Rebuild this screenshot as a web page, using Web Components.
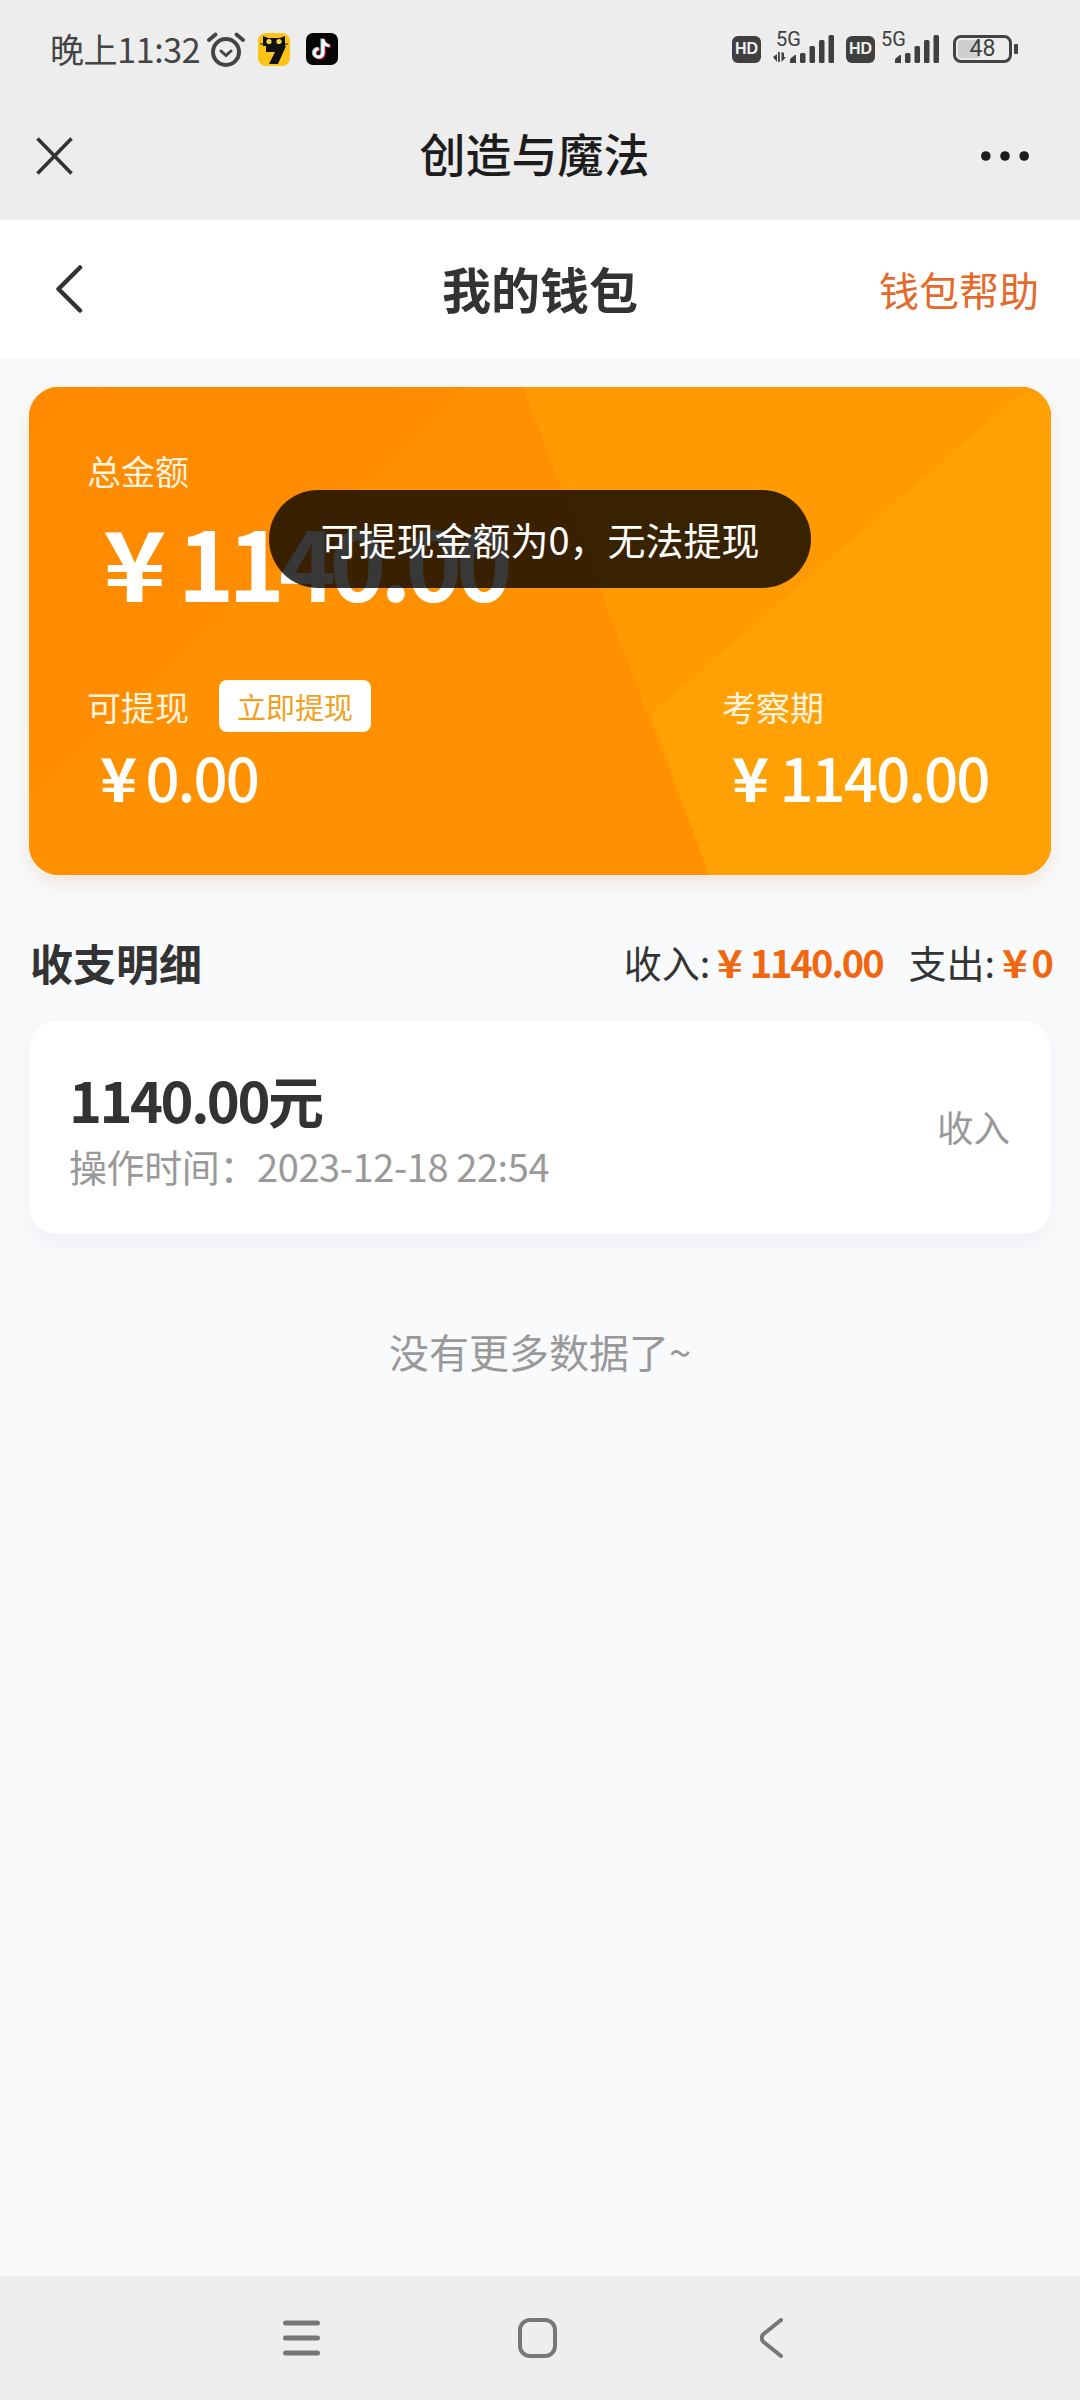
<!doctype html>
<html lang="zh">
<head>
<meta charset="utf-8">
<style>
  html, body { margin: 0; padding: 0; }
  body {
    width: 1080px;
    height: 2400px;
    overflow: hidden;
    background: #f9fafc;
    font-family: "Noto Sans CJK SC", "Noto Sans", sans-serif;
    display: flex;
    flex-direction: column;
  }
  main { flex: 1; position: relative; }
</style>
</head>
<body>
<status-bar></status-bar>
<app-bar>创造与魔法</app-bar>
<wallet-nav></wallet-nav>
<main>
  <balance-card></balance-card>
  <wallet-toast>可提现金额为0，无法提现</wallet-toast>
  <section-head></section-head>
  <record-item amount="1140.00元" time="操作时间：2023-12-18 22:54" kind="收入"></record-item>
  <end-note>没有更多数据了~</end-note>
</main>
<nav-bar></nav-bar>

<script>
function define(name, html) {
  customElements.define(name, class extends HTMLElement {
    constructor() {
      super();
      this.attachShadow({ mode: "open" }).innerHTML = html;
    }
  });
}

// status bar icons
const signal = `<svg width="44" height="28" viewBox="0 0 44 28"><g fill="#3f3f3f">
  <path d="M0 28v-3q0-1 1-2l4-3q1-1 1 1v7z"/><rect x="10" y="18" width="5.500" height="10" rx="1.500"/><rect x="19.500" y="11" width="5.500" height="17" rx="1.500"/><rect x="29" y="5" width="5.500" height="23" rx="1.500"/><rect x="38.500" y="0" width="5.500" height="28" rx="1.500"/></g></svg>`;
const hd = `<span class="hd">HD</span>`;
const tt = "M17 6v14a4.300 4.300 0 1 1-4.300-4.300M17 7c.8 3.400 3 5.400 6.500 5.800";

define("status-bar", `
<style>
  :host { display: flex; align-items: center; height: 98px; padding-left: 50px; background: #ededed; color: #444; }
  .time { font: 400 34px "Noto Sans CJK SC", sans-serif; letter-spacing: -0.4px; width: 157px; white-space: nowrap; margin-top: -2px; }
  .left { display: flex; align-items: center; height: 100%; }
  .left svg { display: block; }
  .right { margin-left: auto; margin-right: 62px; display: flex; align-items: center; }
  .hd { width: 29px; height: 27px; border-radius: 6px; background: #3f3f3f; color: #eee; font: 700 16px "Liberation Sans", sans-serif; display: flex; align-items: center; justify-content: center; }
  .net { position: relative; width: 73px; height: 28px; margin-right: 12px; }
  .net.b { width: 64px; margin-right: 14px; }
  .g { position: absolute; left: 15px; top: -6px; font: 400 20px/20px "Roboto", sans-serif; color: #3f3f3f; }
  .net.b .g { left: 6px; }
  .net svg { position: absolute; right: 0; bottom: 0; }
  .arrows { position: absolute; left: 12px; bottom: 1px; }
  .bat { position: relative; width: 59px; height: 28px; border: 3.500px solid #444; border-radius: 8px; box-sizing: border-box; }
  .bat i { position: absolute; left: 2px; top: 2px; bottom: 2px; width: 22px; background: #cfcfcf; border-radius: 3px 0 0 3px; }
  .bat b { position: absolute; inset: 0; text-align: center; font: 400 23px/21px "Roboto", sans-serif; color: #3f3f3f; }
  .nub { width: 4px; height: 10px; background: #444; margin-left: 2px; border-radius: 1px; }
</style>
<div class="left">
  <span class="time">晚上11:32</span>
  <svg width="38" height="36" viewBox="0 0 38 36"><g fill="none" stroke="#444" stroke-linecap="round"><circle cx="19" cy="21" r="13" stroke-width="4"/><path d="M14 20l5 4.500 5-4.500" stroke-width="3"/><path d="M2 9l6.500-5.500M36 9l-6.500-5.500" stroke-width="3.800"/></g></svg>
  <svg width="32" height="33" viewBox="0 0 32 33" style="margin-left:13px"><rect width="32" height="33" rx="8" fill="#fcc419"/><path d="M5 3l5 2h12l5-2v10H5z" fill="#111"/><path d="M8 13h20L20 31h-9l6-12H8z" fill="#111"/><path d="M2 11h5M25 11h5" stroke="#111" stroke-width="1.200"/><circle cx="11" cy="8.500" r="2.600" fill="#f3d34a"/><circle cx="21" cy="8.500" r="2.600" fill="#f3d34a"/></svg>
  <svg width="32" height="32" viewBox="0 0 32 32" style="margin-left:16px"><rect width="32" height="32" rx="7" fill="#050505"/><path d="${tt}" fill="none" stroke="#ee1d52" stroke-width="3.200" transform="translate(1 .6)"/><path d="${tt}" fill="none" stroke="#69c9d0" stroke-width="3.200" transform="translate(-1 -.4)"/><path d="${tt}" fill="none" stroke="#fff" stroke-width="3"/></svg>
</div>
<div class="right">
  ${hd}
  <div class="net a"><span class="g">5G</span><span class="arrows"><svg width="14" height="10" viewBox="0 0 14 10" style="position:static;display:block"><path d="M0 5l4-3v8zM5 0h1.800v10H5zM8.500 0v10l4.500-5-2 0V1z" fill="#3f3f3f"/></svg></span>${signal}</div>
  ${hd}
  <div class="net b"><span class="g">5G</span>${signal}</div>
  <div class="bat"><i></i><b>48</b></div><div class="nub"></div>
</div>`);

define("app-bar", `
<style>
  :host { display: flex; align-items: center; justify-content: space-between; height: 122px; box-sizing: border-box; padding: 0 51px 6px 36px; background: #ededed; position: relative; }
  .title { position: absolute; left: 0; right: 11px; top: 24px; text-align: center; font: 500 46px/60px "Noto Sans CJK SC", sans-serif; color: #1c1c1c; }
  svg { display: block; }
</style>
<svg width="37" height="38" viewBox="0 0 37 38"><path d="M1.500 1.500l34 35M35.500 1.500l-34 35" stroke="#333" stroke-width="3.600" fill="none"/></svg>
<div class="title"><slot></slot></div>
<svg width="48" height="10" viewBox="0 0 48 10"><g fill="#1c1c1c"><circle cx="4.800" cy="5" r="4.800"/><circle cx="24" cy="5" r="4.800"/><circle cx="43.200" cy="5" r="4.800"/></g></svg>`);

define("wallet-nav", `
<style>
  :host { display: flex; align-items: center; justify-content: space-between; height: 138px; box-sizing: border-box; padding: 0 41px 0 55px; background: #fff; position: relative; }
  svg { display: block; }
  h1 { position: absolute; left: 0; right: 0; top: 33px; margin: 0; text-align: center; font: 700 49px/70px "Noto Sans CJK SC", sans-serif; color: #333; }
  a { font: 400 40px/60px "Noto Sans CJK SC", sans-serif; color: #e5692a; }
</style>
<svg width="28" height="48" viewBox="0 0 28 48"><path d="M25 2.500L3.500 24 25 45.500" fill="none" stroke="#333" stroke-width="4.500" stroke-linecap="round" stroke-linejoin="round"/></svg>
<h1>我的钱包</h1>
<a>钱包帮助</a>`);

define("balance-card", `
<style>
  :host { display: block; position: relative; height: 488px; margin: 29px 29px 0; border-radius: 30px; background: #ff9100; color: #fff; box-shadow: 0 8px 20px rgba(200,140,60,.18); }
  .bg { position: absolute; inset: 0; width: 100%; height: 100%; border-radius: 30px; display: block; }
  .in { position: relative; height: 100%; box-sizing: border-box; padding: 57px 41px 0 58px; display: flex; flex-direction: column; }
  .label { font: 400 34px/54px "Noto Sans CJK SC", sans-serif; color: #fff4e0; }
  .total { font: 700 96px/104px "Noto Sans CJK SC", sans-serif; letter-spacing: -6px; margin: 11px 0 0 16px; white-space: nowrap; }
  .y { display: inline-block; letter-spacing: 0; transform-origin: 0 50%; }
  .total .y { transform: scaleX(1.12); margin-right: 18px; }
  .row { display: flex; justify-content: space-between; margin-top: 67px; }
  .head { display: flex; align-items: center; gap: 30px; height: 54px; }
  .btn { background: #fff; color: #f2a01e; font: 400 29px/52px "Noto Sans CJK SC", sans-serif; width: 152px; height: 52px; text-align: center; border-radius: 8px; margin-top: -2px; }
  .amt { font: 500 60px/72px "Noto Sans CJK SC", sans-serif; letter-spacing: -2px; margin: 6px 0 0 13px; white-space: nowrap; }
  .amt .y { font-weight: 700; transform: scaleX(1.05); margin-right: 10px; }
  .rt { width: 288px; }
  .rt .amt { margin-left: 10px; }
  .rt .amt .y { margin-right: 12px; }
</style>
<svg class="bg" viewBox="0 0 1022 488" preserveAspectRatio="none">
  <defs><linearGradient id="g" x1="0" y1="0" x2="1" y2="1"><stop offset="0" stop-color="#ff8a00"/><stop offset="1" stop-color="#ff8f00"/></linearGradient></defs>
  <rect width="1022" height="488" fill="#ff9100"/>
  <path d="M0 0H437L0 408z" fill="url(#g)"/>
  <path d="M494 0H1022V488H680z" fill="#ff9b00"/>
  <path d="M1022 0L990 8 622 327 680 488H1022z" fill="#ffa005"/>
</svg>
<div class="in">
  <div class="label">总金额</div>
  <div class="total"><span class="y">¥</span>1140.00</div>
  <div class="row">
    <div>
      <div class="head"><span class="label">可提现</span><span class="btn">立即提现</span></div>
      <div class="amt"><span class="y">¥</span>0.00</div>
    </div>
    <div class="rt">
      <div class="head"><span class="label">考察期</span></div>
      <div class="amt"><span class="y">¥</span>1140.00</div>
    </div>
  </div>
</div>`);

define("wallet-toast", `
<style>
  :host { position: absolute; left: 269px; top: 132px; width: 542px; height: 98px; border-radius: 49px; background: rgba(0,0,0,.78); color: #fff; display: flex; align-items: center; justify-content: center; font: 400 38px/1 "Noto Sans CJK SC", sans-serif; white-space: nowrap; }
</style>
<slot></slot>`);

define("section-head", `
<style>
  :host { display: flex; align-items: center; justify-content: space-between; height: 66px; margin: 54px 28px 0 30px; color: #333; }
  h2 { margin: 0; font: 700 43px/66px "Noto Sans CJK SC", sans-serif; }
  .sum { font: 400 38px/66px "Noto Sans CJK SC", sans-serif; white-space: nowrap; display: flex; align-items: baseline; }
  b { color: #f0670f; font-weight: 700; letter-spacing: -2px; margin-left: 7px; }
  .y { display: inline-block; letter-spacing: 0; transform: scaleX(1.15); transform-origin: 0 50%; margin-right: 10px; }
  b:last-child .y { margin-right: 7px; }
  .gap { margin-left: 26px; }
</style>
<h2>收支明细</h2>
<div class="sum"><span>收入:</span><b><span class="y">¥</span>1140.00</b><span class="gap">支出:</span><b><span class="y">¥</span>0</b></div>`);

class RecordItem extends HTMLElement {
  constructor() {
    super();
    const shadow = this.attachShadow({ mode: "open" });
    shadow.innerHTML = `
    <style>
      :host { display: flex; align-items: center; justify-content: space-between; height: 213px; box-sizing: border-box; margin: 26px 29px 0; padding: 0 41px 3px 40px; background: #fff; border-radius: 28px; box-shadow: 0 8px 24px rgba(120,120,140,.08); }
      .amount { font: 700 56px/72px "Noto Sans CJK SC", sans-serif; color: #333; letter-spacing: -2.500px; }
      .time { font: 400 38px/46px "Noto Sans CJK SC", sans-serif; color: #999; white-space: nowrap; letter-spacing: -.4px; margin-top: 8px; }
      .kind { font: 400 36.500px/50px "Noto Sans CJK SC", sans-serif; color: #999; margin-top: 1px; }
    </style>
    <div>
      <div class="amount"></div>
      <div class="time"></div>
    </div>
    <div class="kind"></div>`;
    shadow.querySelector(".amount").textContent = this.getAttribute("amount");
    shadow.querySelector(".time").textContent = this.getAttribute("time");
    shadow.querySelector(".kind").textContent = this.getAttribute("kind");
  }
}
customElements.define("record-item", RecordItem);

define("end-note", `
<style>
  :host { display: block; text-align: center; margin-top: 87px; font: 400 40px/60px "Noto Sans CJK SC", sans-serif; color: #999; }
</style>
<slot></slot>`);

define("nav-bar", `
<style>
  :host { display: flex; align-items: center; height: 124px; background: #eee; padding-left: 283px; box-sizing: border-box; }
  svg { display: block; }
</style>
<svg width="37" height="36" viewBox="0 0 37 36"><g stroke="#777" stroke-width="5" stroke-linecap="round"><path d="M2.500 3h32M2.500 18h32M2.500 33h32"/></g></svg>
<svg width="39" height="40" viewBox="0 0 39 40" style="margin-left:198px"><rect x="2" y="2" width="35" height="36" rx="10" fill="none" stroke="#777" stroke-width="4"/></svg>
<svg width="23" height="40" viewBox="0 0 23 40" style="margin-left:203px"><path d="M21 2L3 16.500q-2.500 3.500 0 7L21 38" fill="none" stroke="#777" stroke-width="4" stroke-linecap="round"/></svg>`);
</script>
</body>
</html>
